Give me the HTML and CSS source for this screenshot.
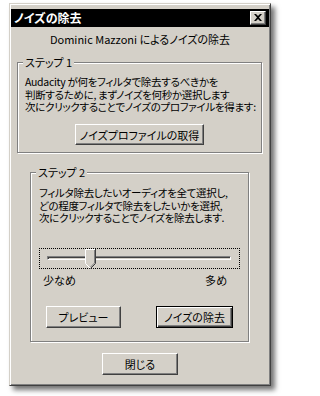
FILE: index.html
```html
<!DOCTYPE html>
<html lang="ja">
<head>
<meta charset="utf-8">
<title>ノイズの除去</title>
<link rel="stylesheet" href="styles.css">
</head>
<body>
<div class="win">
  <div class="titlebar">
    <span class="title">ノイズの除去</span>
    <span class="close">
      <svg width="8" height="7" viewBox="0 0 8 7"><path d="M0 0H2L4 2L6 0H8L5 3.5L8 7H6L4 5L2 7H0L3 3.5Z" fill="#000"/></svg>
    </span>
  </div>
  <div class="content">
    <p class="subtitle">Dominic Mazzoni によるノイズの除去</p>
    <fieldset class="group g1">
      <legend>ステップ 1</legend>
      <div class="inner in1">
        <div class="desc">
          <div class="line">Audacity が何をフィルタで除去するべきかを</div>
          <div class="line">判断するために, まずノイズを何秒か選択します</div>
          <div class="line">次にクリックすることでノイズのプロファイルを得ます:</div>
        </div>
        <div class="center"><button class="btn btn-profile">ノイズプロファイルの取得</button></div>
      </div>
    </fieldset>
    <fieldset class="group g2">
      <legend>ステップ 2</legend>
      <div class="inner in2">
        <div class="desc">
          <div class="line">フィルタ除去したいオーディオを全て選択し,</div>
          <div class="line">どの程度フィルタで除去をしたいかを選択,</div>
          <div class="line">次にクリックすることでノイズを除去します.</div>
        </div>
        <div class="slider">
          <div class="track"></div>
          <svg class="thumb" style="left:45px" width="12" height="20" viewBox="0 0 12 20">
            <path d="M0 0H11V14.5L5.5 20L0 14.5Z" fill="#d4d0c8"/>
            <path d="M0.5 14.5V0.5H10.5" stroke="#fff" fill="none"/>
            <path d="M0.5 14.5L5.5 19.5" stroke="#fff" fill="none"/>
            <path d="M10.5 0V14.5L5.5 19.5" stroke="#404040" fill="none"/>
            <path d="M9.5 1V14L5.5 18" stroke="#808080" fill="none"/>
          </svg>
        </div>
        <div class="scale"><span>少なめ</span><span>多め</span></div>
        <div class="actions">
          <button class="btn btn-preview">プレビュー</button>
          <button class="btn btn-remove default">ノイズの除去</button>
        </div>
      </div>
    </fieldset>
    <div class="center"><button class="btn btn-close">閉じる</button></div>
  </div>
</div>
</body>
</html>
```

FILE: styles.css
```css
html, body {
  margin: 0;
  padding: 0;
  background: #ffffff;
}
body {
  width: 282px;
  height: 396px;
  overflow: hidden;
  font-family: "Noto Sans CJK JP", "Noto Sans", sans-serif;
  font-size: 11px;
  font-feature-settings: "palt" 1;
  color: #000;
}
.win {
  box-sizing: border-box;
  margin: 3px 0 0 9px;
  width: 262px;
  height: 383px;
  background: #d4d0c8;
  border: 1px solid;
  border-color: #d4d0c8 #404040 #404040 #d4d0c8;
  box-shadow: inset 1px 1px #ffffff, inset -1px -1px #808080, 4px 4px 5px rgba(0,0,0,0.55);
  padding: 5px 1px 0 1px;
  display: flex;
  flex-direction: column;
}
.titlebar {
  height: 18px;
  background: #000;
  display: flex;
  align-items: center;
  justify-content: space-between;
  padding: 0 3px 0 3px;
}
.title {
  color: #fff;
  font-weight: bold;
  font-size: 12px;
  line-height: 18px;
}
.close {
  box-sizing: border-box;
  width: 16px;
  height: 14px;
  background: #d4d0c8;
  border: 1px solid;
  border-color: #fff #404040 #404040 #fff;
  box-shadow: inset -1px -1px #808080;
  display: flex;
  align-items: center;
  justify-content: center;
  padding: 0 1px 1px 0;
}
.content {
  display: flex;
  flex-direction: column;
}
.subtitle {
  margin: 6px 0 0 0;
  line-height: 12px;
  text-align: center;
  white-space: nowrap;
}
.group {
  margin: 0;
  padding: 0;
  border: 1px solid #808080;
  box-shadow: inset 1px 1px #fff, 1px 1px #fff;
  min-width: 0;
}
.group legend {
  padding: 0 2px;
  margin-left: 5px;
  line-height: 13px;
  background: #d4d0c8;
}
.g1 {
  margin: 11px 7px 0 6px;
}
.g2 {
  margin: 13px 20px 0 19px;
}
.inner {
  display: flex;
  flex-direction: column;
}
.in1 {
  padding: 7px 7px 7px 7px;
}
.in2 {
  padding: 8px 8px 13px 8px;
}
.desc {
  font-size: 10.5px;
  letter-spacing: -0.3px;
  white-space: nowrap;
}
.line {
  height: 12.5px;
  line-height: 12.5px;
}
.center {
  display: flex;
  justify-content: center;
}
.btn {
  box-sizing: border-box;
  font: inherit;
  font-size: 11px;
  color: #000;
  background: #d4d0c8;
  border: 1px solid;
  border-color: #fff #404040 #404040 #fff;
  box-shadow: inset -1px -1px #808080;
  padding: 0;
  margin: 0;
  line-height: 18px;
  white-space: nowrap;
}
.btn.default {
  border: 1px solid #000;
  box-shadow: inset 1px 1px #fff, inset -1px -1px #404040, inset -2px -2px #808080;
}
.btn-profile {
  margin-top: 10.5px;
  width: 129px;
  height: 21px;
}
.slider {
  position: relative;
  box-sizing: border-box;
  margin: 23.5px 0 0 0;
  width: 201px;
  height: 21px;
  border: 1px dotted #000;
}
.track {
  box-sizing: border-box;
  margin: 7px 0 0 7px;
  width: 184px;
  height: 4px;
  border-top: 1px solid #808080;
  border-left: 1px solid #808080;
  border-bottom: 1px solid #fff;
  border-right: 1px solid #fff;
  box-shadow: inset 1px 1px #404040;
}
.thumb {
  position: absolute;
  top: 0;
}
.scale {
  display: flex;
  justify-content: space-between;
  margin: 5px 13px 0 4px;
  line-height: 12px;
}
.actions {
  display: flex;
  margin-top: 20px;
}
.btn-preview {
  margin-left: 7px;
  width: 75px;
  height: 22px;
}
.btn-remove {
  margin-left: 35px;
  width: 77px;
  height: 22px;
}
.btn-close {
  margin-top: 11px;
  width: 76px;
  height: 22px;
}
```
